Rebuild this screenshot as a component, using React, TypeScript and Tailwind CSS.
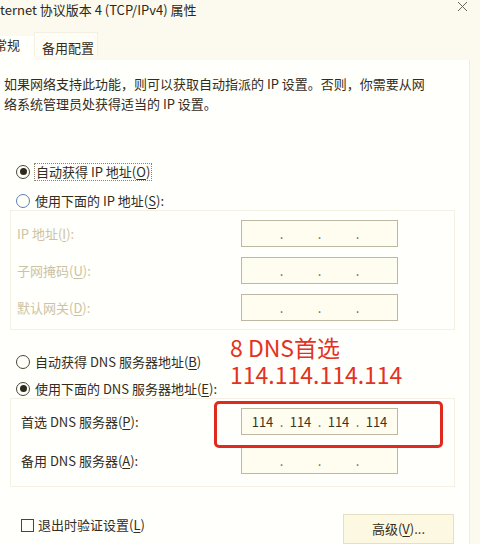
import React from "react";

const U = ({ c }: { c: string }) => <span className="underline underline-offset-2">{c}</span>;

function Radio({ checked, blue }: { checked?: boolean; blue?: boolean }) {
  return (
    <span
      className={`inline-flex items-center justify-center w-[14px] h-[14px] rounded-full border bg-[#fffffa] shrink-0 ${
        blue ? "border-[#5b7fb8]" : "border-[#4a4536]"
      }`}
    >
      {checked && <span className="w-[7px] h-[7px] rounded-full bg-[#2f2a1e]" />}
    </span>
  );
}

function IpBox({ values }: { values?: string[] }) {
  const v = values ?? ["", "", "", ""];
  return (
    <div className="w-[157px] h-[27px] border border-[#bdb7a3] bg-[#fffdf0] flex items-center justify-center">
      {v.map((s, i) => (
        <React.Fragment key={i}>
          {i > 0 && (
            <span className="w-[8px] text-center text-[13px] leading-[16px] text-[#6b6554]">.</span>
          )}
          <span className="w-[30px] text-center text-[13px] leading-[16px] text-[#3a3524]">{s}</span>
        </React.Fragment>
      ))}
    </div>
  );
}

export default function App() {
  return (
    <div className="w-[480px] h-[544px] overflow-hidden bg-[#fcfaee] text-[#332c1c] text-[13px] font-['Noto_Sans_CJK_SC','Noto_Sans',sans-serif] relative">
      {/* title */}
      <div className="h-[18px] pt-[1px] flex items-center justify-between pr-[12px]">
        <span className="leading-[16px] text-[13px] whitespace-nowrap text-[#2e2818]">
          ternet 协议版本 4 (TCP/IPv4) 属性
        </span>
        <svg width="11" height="11" viewBox="0 0 11 11" className="mt-[-6px]">
          <path d="M1 1 L10 10 M10 1 L1 10" stroke="#6a6558" strokeWidth="1" />
        </svg>
      </div>

      {/* tabs */}
      <div className="mt-[18px] h-[24px] flex items-start">
        <div className="ml-[-6px] w-[40px] h-[24px] bg-[#fffffb] leading-[18px] whitespace-nowrap">常规</div>
        <div className="w-[64px] h-[24px] mt-[-4px] pt-[6px] pl-[7px] border border-b-0 border-[#f4f1e4] bg-[#fefdf6] leading-[18px] whitespace-nowrap">
          备用配置
        </div>
      </div>

      {/* panel */}
      <div className="w-[470px] h-[484px] bg-[#fffffb] border-r border-[#f0ecdd] flex flex-col">
        <div className="pt-[14px] pl-[4px] leading-[20px] whitespace-nowrap">
          <div>如果网络支持此功能，则可以获取自动指派的 IP 设置。否则，你需要从网</div>
          <div>络系统管理员处获得适当的 IP 设置。</div>
        </div>

        <div className="mt-[48px] h-[20px] pl-[16px] flex items-center gap-[4px]">
          <Radio checked />
          <span className="leading-[16px] px-[1px] border border-dotted border-[#8a846e] whitespace-nowrap">
            自动获得 IP 地址(<U c="O" />)
          </span>
        </div>
        <div className="mt-[10px] h-[20px] pl-[16px] flex items-center gap-[5px]">
          <Radio blue />
          <span className="leading-[16px] whitespace-nowrap">
            使用下面的 IP 地址(<U c="S" />):
          </span>
        </div>

        <div className="ml-[10px] w-[445px] border border-[#f4f1e4] pt-[9px] pb-[8px] pl-[6px] flex flex-col gap-[10px] text-[#cdc3a4]">
          <div className="flex items-center">
            <span className="w-[224px] whitespace-nowrap">IP 地址(<U c="I" />):</span>
            <IpBox />
          </div>
          <div className="flex items-center">
            <span className="w-[224px] whitespace-nowrap">子网掩码(<U c="U" />):</span>
            <IpBox />
          </div>
          <div className="flex items-center">
            <span className="w-[224px] whitespace-nowrap">默认网关(<U c="D" />):</span>
            <IpBox />
          </div>
        </div>

        <div className="mt-[22px] h-[20px] pl-[16px] flex items-center gap-[5px]">
          <Radio />
          <span className="leading-[16px] whitespace-nowrap">
            自动获得 DNS 服务器地址(<U c="B" />)
          </span>
        </div>
        <div className="mt-[8px] h-[20px] pl-[16px] flex items-center gap-[5px]">
          <Radio checked />
          <span className="leading-[16px] whitespace-nowrap">
            使用下面的 DNS 服务器地址(<U c="E" />):
          </span>
        </div>

        <div className="ml-[10px] w-[445px] border border-[#f4f1e4] pt-[9px] pb-[12px] pl-[10px] flex flex-col gap-[12px]">
          <div className="flex items-center">
            <span className="w-[220px] whitespace-nowrap">首选 DNS 服务器(<U c="P" />):</span>
            <IpBox values={["114", "114", "114", "114"]} />
          </div>
          <div className="flex items-center">
            <span className="w-[220px] whitespace-nowrap">备用 DNS 服务器(<U c="A" />):</span>
            <IpBox />
          </div>
        </div>

        <div className="mt-[27px] pl-[21px] pr-[15px] flex items-start justify-between">
          <div className="mt-[3px] flex items-center gap-[4px]">
            <span className="w-[13px] h-[13px] border border-[#4a4536] bg-[#fffffa]" />
            <span className="leading-[16px] whitespace-nowrap">
              退出时验证设置(<U c="L" />)
            </span>
          </div>
          <div className="w-[111px] h-[30px] border border-[#e6dfc4] bg-[#fcf8e2] flex items-center justify-center leading-[16px] whitespace-nowrap">
            高级(<U c="V" />)...
          </div>
        </div>
      </div>

      {/* red annotation */}
      <div className="absolute left-[230px] top-[334px] text-[#e3321f] text-[23px] leading-[27px] whitespace-nowrap">
        <div>8 DNS首选</div>
        <div>114.114.114.114</div>
      </div>
      <div className="absolute left-[214px] top-[401px] w-[229px] h-[47px] border-[3px] border-[#e02a20] rounded-[5px]" />
    </div>
  );
}
